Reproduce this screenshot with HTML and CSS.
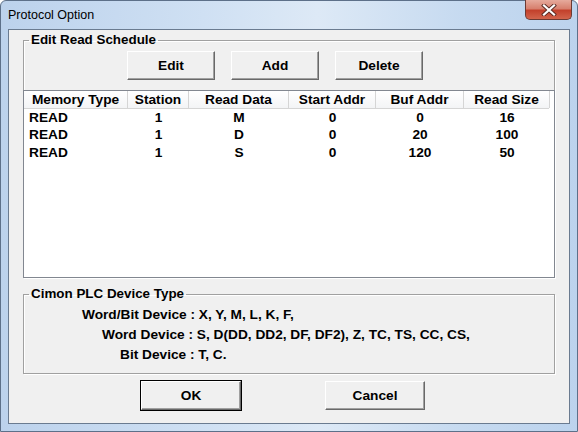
FILE: index.html
```html
<!DOCTYPE html>
<html lang="en">
<head>
<meta charset="UTF-8">
<title>Protocol Option</title>
<link rel="stylesheet" href="styles.css">
</head>
<body>

<div class="window">
    <div class="titlebar">
        <span class="title">Protocol Option</span>
        <div class="close">
            <svg width="16" height="12" viewBox="0 0 16 12">
                <path d="M3 1.5 L13 10.5 M13 1.5 L3 10.5" stroke="#5a2a22" stroke-width="4" stroke-linecap="square"/>
                <path d="M3 1.5 L13 10.5 M13 1.5 L3 10.5" stroke="#fff" stroke-width="2.2" stroke-linecap="square"/>
            </svg>
        </div>
    </div>

    <div class="client">
        <fieldset class="group schedule">
            <legend>Edit Read Schedule</legend>
            <div class="toolbar">
                <button class="btn">Edit</button>
                <button class="btn">Add</button>
                <button class="btn">Delete</button>
            </div>
            <div class="listview">
                <div class="row head">
                    <span>Memory Type</span><span>Station</span><span>Read Data</span>
                    <span>Start Addr</span><span>Buf Addr</span><span>Read Size</span>
                </div>
                <div class="row">
                    <span>READ</span><span>1</span><span>M</span><span>0</span><span>0</span><span>16</span>
                </div>
                <div class="row">
                    <span>READ</span><span>1</span><span>D</span><span>0</span><span>20</span><span>100</span>
                </div>
                <div class="row">
                    <span>READ</span><span>1</span><span>S</span><span>0</span><span>120</span><span>50</span>
                </div>
            </div>
        </fieldset>

        <fieldset class="group devices">
            <legend>Cimon PLC Device Type</legend>
            <p class="dev d1">Word/Bit Device : X, Y, M, L, K, F,</p>
            <p class="dev d2">Word Device : S, D(DD, DD2, DF, DF2), Z, TC, TS, CC, CS,</p>
            <p class="dev d3">Bit Device : T, C.</p>
        </fieldset>

        <div class="actions">
            <button class="btn wide default">OK</button>
            <button class="btn wide">Cancel</button>
        </div>
    </div>
</div>

</body>
</html>
```

FILE: styles.css
```css
/* ─── Layout ─────────────────────────────────────────────────── */
*{box-sizing:border-box;margin:0}
body{
    margin:0;
    font-family:"Liberation Sans",Arial,sans-serif;
    background:#fff;
}

/* ─── Window frame ───────────────────────────────────────────── */
.window{
    width:578px;height:432px;
    display:flex;flex-direction:column;
    padding:0 7px 7px 7px;
    background:linear-gradient(90deg,#bcd2ec 0%,#cfe0f3 35%,#dde9f6 55%,#c6daf0 80%,#bcd3ed 100%);
    border:1px solid #5d7089;border-radius:6px 6px 0 0;
}
.titlebar{
    height:28px;flex:none;
    display:flex;align-items:flex-start;
}
.title{
    font-size:12.5px;color:#000;
    margin:7px 0 0 0;
}
.close{
    margin-left:auto;margin-right:-2px;margin-top:-1px;
    width:47px;height:20px;
    display:flex;align-items:center;justify-content:center;
    border:1px solid #6b3a33;border-top:none;border-radius:0 0 5px 5px;
    background:linear-gradient(#e6aa9c 0%,#d7806e 45%,#c3412c 55%,#d2644c 100%);
}

/* ─── Client area ────────────────────────────────────────────── */
.client{
    flex:1;
    background:#f0f0f0;
    border:1px solid #6a7b90;
    padding:0 14px;
    display:flex;flex-direction:column;
    font-weight:bold;font-size:13.7px;color:#000;
}

.group{
    border:1px solid #a0a0a0;
    box-shadow:1px 1px 0 #fff,inset 1px 1px 0 #fff;
    padding:0;min-width:0;
}
.group legend{
    margin-left:5px;padding:0 2px;
    line-height:16px;font-size:13.4px;
}
.schedule{margin-top:2px}

/* ─── Buttons ────────────────────────────────────────────────── */
.toolbar{
    display:flex;gap:16px;
    padding:3px 0 0 103px;
}
.btn{
    font:bold 13.7px "Liberation Sans",Arial,sans-serif;color:#000;
    width:88px;height:29px;
    background:#f0f0f0;
    border:1px solid;border-color:#fff #696969 #696969 #fff;
    box-shadow:inset -1px -1px 0 #a0a0a0;
    padding:0;
}
.btn.wide{width:100px}
.btn.default{outline:1px solid #000}

/* ─── List view ──────────────────────────────────────────────── */
.listview{
    margin:10px -1px -1px -1px;
    height:188px;
    background:#fff;
    border:1px solid #828790;
}
.row{
    display:grid;
    grid-template-columns:104px 61px 100px 87px 88px 86px;
    height:17.4px;line-height:17.4px;
}
.row span{text-align:center}
.row span:first-child{text-align:left;padding-left:5px}
.row.head{
    height:18px;line-height:17px;
    width:525px;
    background:linear-gradient(#ffffff,#f3f4f6);
    border-bottom:1px solid #d5d5d5;
}
.row.head span{
    text-align:center;padding:0;
    border-right:1px solid #d5d5d5;
}

/* ─── Device types ───────────────────────────────────────────── */
.devices{
    margin-top:8px;
    padding:3px 0 8px 0;
}
.dev{line-height:20px;white-space:nowrap}
.d1{padding-left:58px}
.d2{padding-left:78px}
.d3{padding-left:96px}

.actions{
    display:flex;gap:84px;
    padding:7px 0 0 118px;
}
```
